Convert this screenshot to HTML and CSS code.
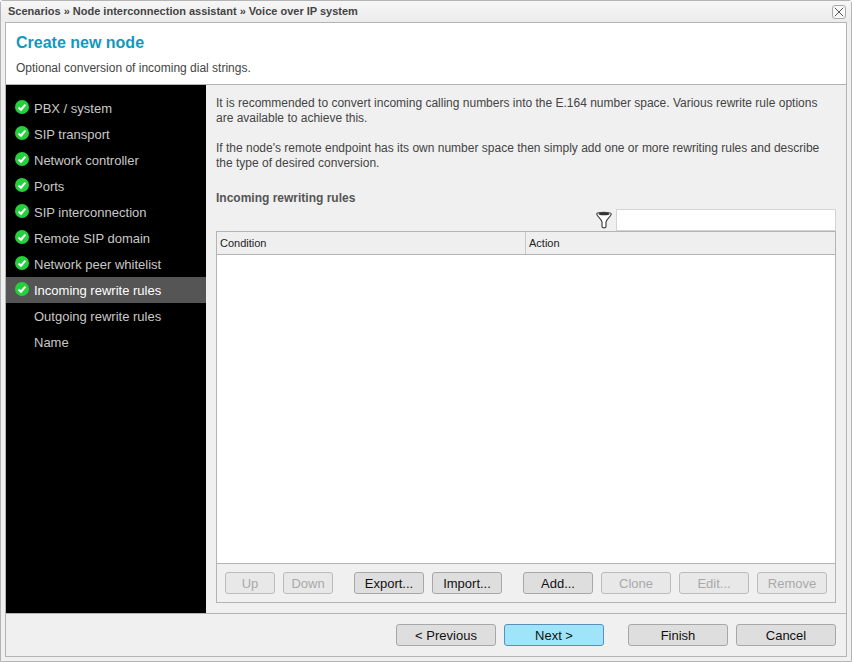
FILE: index.html
```html
<!DOCTYPE html>
<html lang="en">
<head>
<meta charset="utf-8">
<title>Create new node</title>
<link rel="stylesheet" href="styles.css">
</head>
<body>
<svg class="defs" width="0" height="0" aria-hidden="true">
  <symbol id="ok" viewBox="0 0 14 14">
    <circle cx="7" cy="7" r="7" fill="#24d03c"/>
    <path d="M3.600 7.400 6 9.700 10.400 4.600" fill="none" stroke="#fff" stroke-width="2.100"/>
  </symbol>
</svg>
<div class="window">
  <div class="titlebar">
    <span class="crumbs">Scenarios » Node interconnection assistant » Voice over IP system</span>
    <span class="close"><svg width="10" height="10" viewBox="0 0 10 10"><path d="M.8.8 9.200 9.200M9.200.8.8 9.200" stroke="#555" stroke-width="1" fill="none"/></svg></span>
  </div>
  <div class="panel">
    <header class="head">
      <h1>Create new node</h1>
      <p>Optional conversion of incoming dial strings.</p>
    </header>
    <div class="main">
      <nav class="steps">
        <div class="step"><svg class="tick"><use href="#ok"/></svg>PBX / system</div>
        <div class="step"><svg class="tick"><use href="#ok"/></svg>SIP transport</div>
        <div class="step"><svg class="tick"><use href="#ok"/></svg>Network controller</div>
        <div class="step"><svg class="tick"><use href="#ok"/></svg>Ports</div>
        <div class="step"><svg class="tick"><use href="#ok"/></svg>SIP interconnection</div>
        <div class="step"><svg class="tick"><use href="#ok"/></svg>Remote SIP domain</div>
        <div class="step"><svg class="tick"><use href="#ok"/></svg>Network peer whitelist</div>
        <div class="step current"><svg class="tick"><use href="#ok"/></svg>Incoming rewrite rules</div>
        <div class="step todo">Outgoing rewrite rules</div>
        <div class="step todo">Name</div>
      </nav>
      <section class="content">
        <p class="para">It is recommended to convert incoming calling numbers into the E.164 number space. Various rewrite rule options<br>are available to achieve this.</p>
        <p class="para second">If the node's remote endpoint has its own number space then simply add one or more rewriting rules and describe<br>the type of desired conversion.</p>
        <h2>Incoming rewriting rules</h2>
        <div class="filter">
          <svg class="funnel" width="16" height="18" viewBox="0 0 16 18"><path d="M.7 3C.7.8 15.300.8 15.300 3 15.300 5 10.200 8.500 10 11V15.500C10 17.300 6 17.300 6 15.500V11C5.800 8.500.7 5 .7 3Z" fill="#fff" stroke="#444" stroke-width="1.200"/><ellipse cx="8" cy="3" rx="5.500" ry="1.300" fill="#333"/></svg>
          <input class="search" type="text" aria-label="Filter">
        </div>
        <div class="rules">
          <div class="thead"><div class="th cond">Condition</div><div class="th">Action</div></div>
          <div class="tbody"></div>
          <div class="toolbar">
            <div class="group">
              <button class="btn small" disabled>Up</button>
              <button class="btn small" disabled>Down</button>
            </div>
            <div class="group">
              <button class="btn">Export...</button>
              <button class="btn">Import...</button>
            </div>
            <div class="group">
              <button class="btn">Add...</button>
              <button class="btn" disabled>Clone</button>
              <button class="btn" disabled>Edit...</button>
              <button class="btn" disabled>Remove</button>
            </div>
          </div>
        </div>
      </section>
    </div>
    <footer class="foot">
      <button class="btn wide">&lt; Previous</button>
      <button class="btn wide primary">Next &gt;</button>
      <button class="btn wide gap">Finish</button>
      <button class="btn wide">Cancel</button>
    </footer>
  </div>
</div>
</body>
</html>
```
FILE: styles.css
```css
* { box-sizing: border-box; }
html, body { margin: 0; height: 100%; }
body { width: 852px; height: 662px; overflow: hidden; background: #fff; font-family: "Liberation Sans", Arial, sans-serif; font-size: 12px; color: #444; }
.defs { position: absolute; }
.window { width: 852px; height: 662px; padding: 0 5px 4px; background: #f0f0f0; border: 1px solid #b4b4b4; border-radius: 3px 3px 0 0; display: flex; flex-direction: column; }
.titlebar { height: 21px; flex: none; display: flex; align-items: center; justify-content: space-between; background: linear-gradient(#f6f6f6, #ececec); margin: 0 -5px; padding: 0 5px 0 7px; }
.crumbs { font-size: 11px; font-weight: bold; color: #444; position: relative; top: -1px; }
.close { width: 14px; height: 14px; border: 1px solid #aaa; border-radius: 3px; background: #f8f8f8; display: flex; align-items: center; justify-content: center; }
.panel { flex: 1; display: flex; flex-direction: column; border: 1px solid #b4b4b4; min-height: 0; width: 842px; margin-left: -1px; }
.head { flex: none; background: #fff; border-bottom: 1px solid #b4b4b4; padding: 10px 10px 0; height: 62px; }
h1 { margin: 0; font-size: 16px; line-height: 19px; font-weight: bold; color: #1199bb; }
.head p { margin: 9px 0 0; font-size: 12px; line-height: 14px; color: #444; }
.main { height: 529px; flex: none; display: flex; border-bottom: 1px solid #b4b4b4; }
.steps { width: 200px; flex: none; background: #000; padding-top: 10px; }
.step { height: 26px; display: flex; align-items: center; padding-left: 28px; position: relative; font-size: 13px; color: #c8c8c8; }
.tick { position: absolute; left: 9px; top: 5px; width: 14px; height: 14px; }
.current { background: #555; color: #fff; }
.content { flex: 1; padding: 11px 10px 0; min-width: 0; display: flex; flex-direction: column; }
.para { margin: 0; line-height: 15px; color: #444; }
.second { margin-top: 15px; }
h2 { margin: 20px 0 0; font-size: 12px; line-height: 15px; font-weight: bold; color: #555; }
.filter { display: flex; justify-content: flex-end; align-items: center; gap: 4px; margin-top: 3px; height: 22px; }
.funnel { display: block; }
.search { width: 220px; height: 22px; border: 1px solid #d4d4d4; background: #fff; padding: 0 3px; outline: none; }
.rules { height: 372px; border: 1px solid #b4b4b4; display: flex; flex-direction: column; }
.thead { height: 23px; flex: none; display: flex; background: #efefef; border-bottom: 1px solid #b4b4b4; }
.th { flex: 1; padding-left: 3px; font-size: 11px; line-height: 22px; color: #222; }
.cond { flex: none; width: 309px; border-right: 1px solid #c8c8c8; }
.tbody { flex: 1; background: #fff; border-bottom: 1px solid #b4b4b4; }
.toolbar { height: 38px; flex: none; display: flex; justify-content: space-between; align-items: flex-start; padding: 8px 8px 0; }
.group { display: flex; gap: 8px; }
.btn { width: 70px; height: 22px; padding: 0; border: 1px solid #a8a8a8; border-radius: 3px; background: #dedede; font-family: inherit; font-size: 13px; color: #111; }
.small { width: 50px; }
.btn:disabled { background: #e8e8e8; color: #a8a8a8; border-color: #bcbcbc; }
.foot { flex: 1; display: flex; justify-content: flex-end; align-items: flex-start; gap: 8px; padding: 10px 10px 0 0; }
.wide { width: 100px; height: 22px; }
.primary { background: #9ee5fa; border-color: #5a8fc0; }
.gap { margin-left: 16px; }
```
